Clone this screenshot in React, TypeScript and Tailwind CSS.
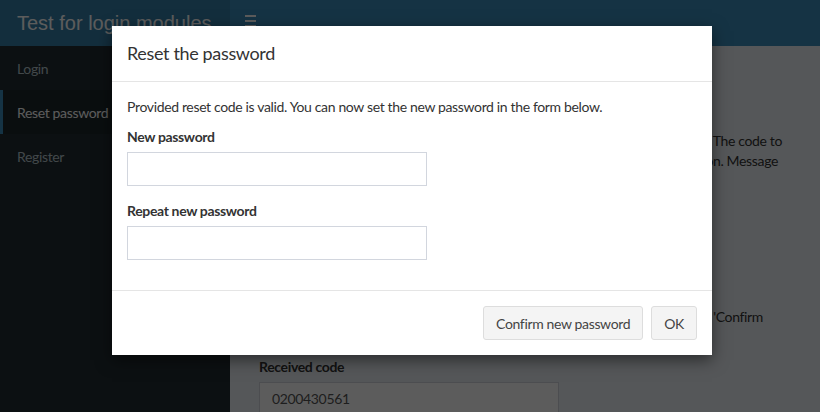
import React from "react";

const font = { fontFamily: "Lato, 'Open Sans', 'Liberation Sans', sans-serif", letterSpacing: "-0.35px" };

function SideItem({ label, active }: { label: string; active?: boolean }) {
  return (
    <div
      className={
        "h-[44px] flex items-center pl-[14px] border-l-[3px] text-[14px] " +
        (active ? "border-[#3c8dbc] bg-[#1e282c] text-white" : "border-transparent text-[#b8c7ce]")
      }
    >
      {label}
    </div>
  );
}

export default function App() {
  return (
    <div className="relative w-[820px] h-[412px] overflow-hidden bg-[#ecf0f5] text-[#333]" style={font}>
      {/* underlying page */}
      <div className="flex h-[46px]">
        <div
          className="w-[230px] shrink-0 bg-[#367fa9] text-white flex items-center pl-[17px] text-[20px] whitespace-nowrap"
          style={{ fontFamily: "'Liberation Sans', Arial, sans-serif", letterSpacing: "0px" }}
        >
          Test for login modules
        </div>
        <div className="flex-1 bg-[#3c8dbc] flex items-start pl-[15px] pt-[15px]">
          <div className="flex flex-col gap-[3px] w-[11px]">
            <div className="h-[2px] bg-white" />
            <div className="h-[2px] bg-white" />
            <div className="h-[2px] bg-white" />
          </div>
        </div>
      </div>
      <div className="flex h-[366px]">
        <div className="w-[230px] shrink-0 bg-[#222d32]">
          <SideItem label="Login" />
          <SideItem label="Reset password" active />
          <SideItem label="Register" />
        </div>
        <div className="flex-1 min-w-0 overflow-hidden text-[14px] leading-[20px]">
          <div className="flex flex-col items-end pr-[38px] pt-[85px]">
            <div className="whitespace-nowrap">Enter the e-mail used for registration and press 'Send code'. The code to</div>
            <div className="whitespace-nowrap mr-[4px]">will be sent to the provided e-mail with the reset information. Message</div>
          </div>
          <div className="flex flex-col items-end pr-[57px] pt-[136px]">
            <div className="whitespace-nowrap">Paste the code in the field below and press 'Confirm</div>
          </div>
          <div className="pl-[29px] pt-[30px]">
            <div className="font-bold mb-[5px]">Received code</div>
            <div className="w-[300px] h-[34px] bg-white border border-[#d2d6de] px-[12px] flex items-center text-[#555]">0200430561</div>
          </div>
        </div>
      </div>

      {/* backdrop + modal */}
      <div className="absolute inset-0 bg-black/[0.64] flex justify-center items-start pt-[26px] pl-[4px]">
        <div className="w-[600px] bg-white text-[#333] shadow-[0_5px_15px_rgba(0,0,0,0.5)]">
          <div className="px-[15px] py-[15px] border-b border-[#e5e5e5]">
            <div className="text-[18px] leading-[25px]">Reset the password</div>
          </div>
          <div className="p-[15px] text-[14px] leading-[20px]">
            <p className="mb-[10px]">Provided reset code is valid. You can now set the new password in the form below.</p>
            <div className="mb-[15px]">
              <div className="font-bold mb-[5px]">New password</div>
              <input type="password" className="block w-[300px] h-[34px] border border-[#d2d6de] outline-none px-[12px]" />
            </div>
            <div className="mb-[15px]">
              <div className="font-bold mb-[5px]">Repeat new password</div>
              <input type="password" className="block w-[300px] h-[34px] border border-[#d2d6de] outline-none px-[12px]" />
            </div>
          </div>
          <div className="border-t border-[#e5e5e5] p-[15px] flex justify-end gap-[8px]">
            <button className="h-[34px] px-[12px] bg-[#f4f4f4] border border-[#ddd] rounded-[3px] text-[14px] text-[#444]">Confirm new password</button>
            <button className="h-[34px] px-[12px] bg-[#f4f4f4] border border-[#ddd] rounded-[3px] text-[14px] text-[#444]">OK</button>
          </div>
        </div>
      </div>
    </div>
  );
}
